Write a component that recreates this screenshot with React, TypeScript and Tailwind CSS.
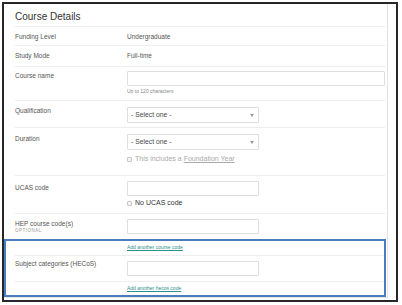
function TextInput({ wide }: { wide?: boolean }) {
  return <div className={`${wide ? 'w-full' : 'w-[132px]'} h-[15px] shrink-0 border border-[#dedede] bg-white rounded-[1px]`} />;
}

function Select() {
  return (
    <div className="w-[132px] h-[16px] shrink-0 border border-[#dedede] bg-white rounded-[1px] flex items-center justify-between pl-[3px] pr-[4px]">
      <span className="text-[6.8px] leading-none text-[#4a4a4a]">- Select one -</span>
      <svg width="4" height="3" viewBox="0 0 4 3">
        <path d="M0 0h4L2 3z" fill="#999" />
      </svg>
    </div>
  );
}

function Checkbox() {
  return <span className="inline-block w-[5px] h-[5px] border border-[#c8c8c8] bg-[#f4f4f4] rounded-[1px] mr-[3px]" />;
}

function AddLink({ children }: { children: string }) {
  return <span className="block text-[5px] leading-[6px] text-[#2d8f8a] underline">{children}</span>;
}

export default function App() {
  return (
    <div className="w-[402px] h-[305px] bg-white pt-[2px] pl-[2px] font-['Liberation_Sans',Arial,sans-serif]">
      <div className="relative w-[396px] h-[300px] border-2 border-[#262626]">
        <div className="w-[384px] h-[294px] border-r border-b border-[#e4e4e4] pl-[11px] pr-[2px] leading-[9px]">
          {/* title */}
          <div className="h-[23px] pt-[4px] flex items-center border-b border-[#eeeeee]">
            <h2 className="text-[10px] leading-[12px] text-[#333]">Course Details</h2>
          </div>

          <div className="h-[19px] flex items-center border-b border-[#eeeeee] text-[6.5px] text-[#555]">
            <div className="w-[112px]">Funding Level</div>
            <div>Undergraduate</div>
          </div>

          <div className="h-[21px] pb-[1px] flex items-center border-b border-[#eeeeee] text-[6.5px] text-[#555]">
            <div className="w-[112px]">Study Mode</div>
            <div>Full-time</div>
          </div>

          <div className="h-[34px] pt-[4px] flex border-b border-[#eeeeee]">
            <div className="w-[112px] text-[6.5px] leading-[9px] text-[#555]">Course name</div>
            <div className="flex-1 flex flex-col">
              <TextInput wide />
              <span className="mt-[2px] text-[5px] leading-[6px] text-[#888]">Up to 120 characters</span>
            </div>
          </div>

          <div className="h-[27px] pt-[6px] flex border-b border-[#eeeeee]">
            <div className="w-[112px] text-[6.5px] leading-[9px] text-[#555] -mt-[1px]">Qualification</div>
            <Select />
          </div>

          <div className="h-[48px] pt-[6px] flex border-b border-[#eeeeee]">
            <div className="w-[112px] text-[6.5px] leading-[9px] text-[#555]">Duration</div>
            <div className="flex flex-col">
              <Select />
              <div className="mt-[5px] flex items-center text-[7px] leading-[8px] text-[#aaa]">
                <Checkbox />
                <span>
                  This includes a <span className="underline">Foundation Year</span>
                </span>
              </div>
            </div>
          </div>

          <div className="h-[38px] pt-[5px] flex border-b border-[#eeeeee]">
            <div className="w-[112px] text-[6.5px] leading-[9px] text-[#555] mt-[2px]">UCAS code</div>
            <div className="flex flex-col">
              <TextInput />
              <div className="mt-[3px] flex items-center text-[7px] leading-[8px] text-[#333]">
                <Checkbox />
                <span>No UCAS code</span>
              </div>
            </div>
          </div>

          <div className="h-[42px] pt-[5px] flex border-b border-[#eeeeee]">
            <div className="w-[112px] flex flex-col">
              <span className="text-[6.5px] leading-[9px] text-[#555]">HEP course code(s)</span>
              <span className="text-[4.5px] leading-[6px] tracking-[0.5px] text-[#999]">OPTIONAL</span>
            </div>
            <div className="flex flex-col">
              <TextInput />
              <div className="mt-[10px]">
                <AddLink>Add another course code</AddLink>
              </div>
            </div>
          </div>

          <div className="h-[26px] pt-[5px] flex border-b border-[#eeeeee]">
            <div className="w-[112px] text-[6.5px] leading-[9px] text-[#555] -mt-[2px]">Subject categories (HECoS)</div>
            <TextInput />
          </div>

          <div className="pt-[3px] pl-[112px]">
            <AddLink>Add another hecos code</AddLink>
          </div>
        </div>

        {/* highlight annotation */}
        <div className="absolute left-[0px] top-[235px] w-[382px] h-[58px] border-[2px] border-[#4a7dbf]" />
      </div>
    </div>
  );
}
